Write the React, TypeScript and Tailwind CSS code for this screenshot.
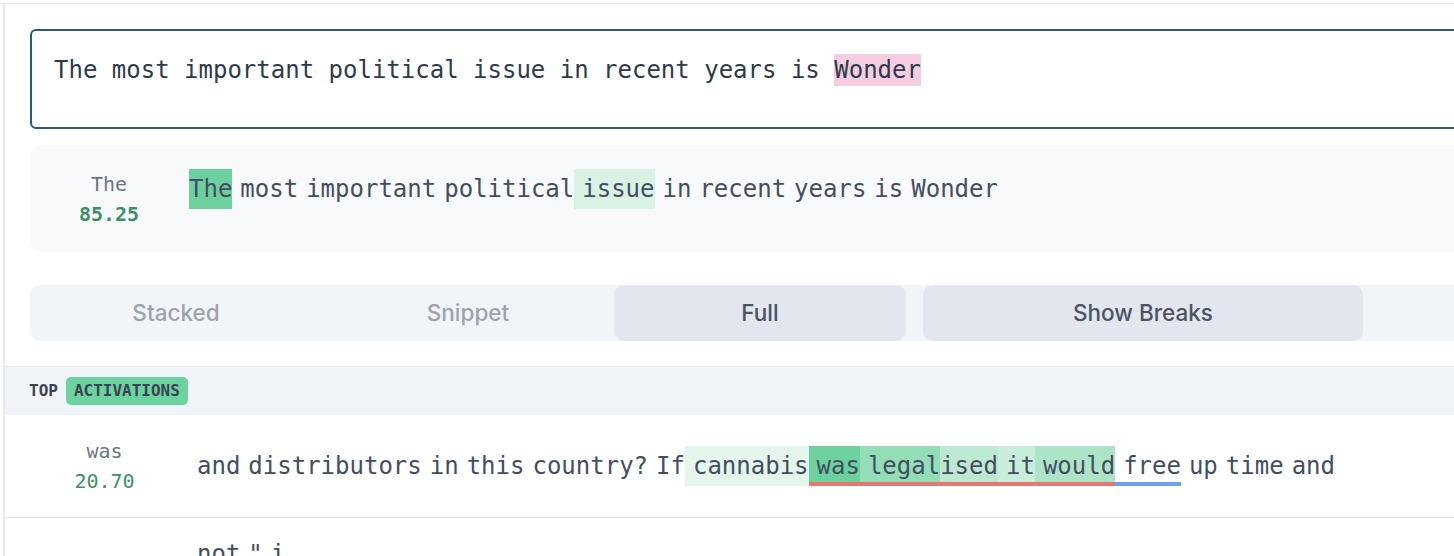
import React from "react";

type Tok = { t: string; bg?: string; line?: string };

const mono = "font-['DejaVu_Sans_Mono',monospace]";

const promptTokens: Tok[] = [
  { t: "The", bg: "bg-[#6cd19f]" },
  { t: " most" },
  { t: " important" },
  { t: " political" },
  { t: " issue", bg: "bg-[#daf2e4]" },
  { t: " in" },
  { t: " recent" },
  { t: " years" },
  { t: " is" },
  { t: " Wonder" },
];

const red = "shadow-[inset_0_-4px_0_#e57771]";
const blue = "shadow-[inset_0_-4px_0_#6fa0ee]";

const rowOne: Tok[] = [
  { t: "and" },
  { t: " distributors" },
  { t: " in" },
  { t: " this" },
  { t: " country" },
  { t: "?" },
  { t: " If" },
  { t: " cannabis", bg: "bg-[#e4f6ec]" },
  { t: " was", bg: "bg-[#6cd19f]", line: red },
  { t: " legal", bg: "bg-[#93ddb7]", line: red },
  { t: "ised", bg: "bg-[#bde9d2]", line: red },
  { t: " it", bg: "bg-[#c8eedb]", line: red },
  { t: " would", bg: "bg-[#ade4c8]", line: red },
  { t: " free", line: blue },
  { t: " up" },
  { t: " time" },
  { t: " and" },
];

const rowTwo: Tok[] = [{ t: "not" }, { t: ' "' }, { t: " i" }];

function Token({ tok }: { tok: Tok }) {
  const lead = tok.t.startsWith(" ");
  const word = lead ? tok.t.slice(1) : tok.t;
  return (
    <span
      className={`inline-block h-[40px] leading-[40px] whitespace-pre ${tok.bg ?? ""} ${
        tok.line ?? ""
      }`}
    >
      {lead && <span className="inline-block w-[8px]">&nbsp;</span>}
      {word}
    </span>
  );
}

function TokenLine({ tokens }: { tokens: Tok[] }) {
  return (
    <div className={`${mono} text-[24px] text-[#434e61]`}>
      {tokens.map((tok, i) => (
        <Token key={i} tok={tok} />
      ))}
    </div>
  );
}

const App = () => {
  return (
    <div className="w-[1454px] h-[556px] overflow-hidden bg-white pt-[3px]">
      <div className="w-[1900px] border-t border-[#e5e6ec]">
        <div className="ml-[3px] border-l-2 border-[#e6eaf0]">
          <div className="px-[25px] pt-[25px] pb-[25px]">
            {/* prompt input */}
            <div
              className={`${mono} h-[100px] rounded-md border-2 border-[#2c5b82] pl-[22px] pt-[21px] text-[24px] leading-[36px] text-[#2e3a4c]`}
            >
              The most important political issue in recent years is{" "}
              <span className="inline-block leading-[32px] bg-[#f6cde0]">Wonder</span>
            </div>

            {/* prompt activations */}
            <div className="mt-[16px] flex items-start rounded-xl bg-[#f8f9fb] pl-[24px] pt-[24px] pb-[23px]">
              <div className={`${mono} w-[110px] text-center text-[20px] leading-[30px]`}>
                <div className="text-[#6b7585]">The</div>
                <div className="font-bold text-[#3e8f65]">85.25</div>
              </div>
              <div className="ml-[25px]">
                <TokenLine tokens={promptTokens} />
              </div>
            </div>

            {/* view toggles */}
            <div className="mt-[33px] flex h-[56px] rounded-[10px] bg-[#f1f4f8] font-['Inter',sans-serif] text-[22.5px] font-medium">
              <div className="flex w-[876px]">
                <button className="flex-1 rounded-[10px] text-[#9ca3af]">Stacked</button>
                <button className="flex-1 rounded-[10px] text-[#9ca3af]">Snippet</button>
                <button className="flex-1 rounded-[10px] bg-[#e2e6ee] text-[#4a5363]">Full</button>
              </div>
              <button className="ml-[17px] w-[440px] rounded-[10px] bg-[#e2e6ee] text-[#4a5363]">
                Show Breaks
              </button>
            </div>
          </div>

          {/* section header */}
          <div className="flex h-[49px] items-center border-t border-[#e3e7ed] bg-[#f1f4f8] pl-[24px]">
            <span className={`${mono} text-[16px] font-bold text-[#3a4353]`}>TOP</span>
            <span
              className={`${mono} ml-[8px] flex h-[28px] items-center rounded-[5px] bg-[#6cd3a0] px-[8px] text-[16px] font-bold text-[#3a4353]`}
            >
              ACTIVATIONS
            </span>
          </div>

          {/* rows */}
          <div className="flex items-center border-b border-[#e5e8ee] py-[21px] pl-[25px]">
            <div className={`${mono} w-[149px] text-center text-[20px] leading-[30px]`}>
              <div className="text-[#6b7585]">was</div>
              <div className="text-[#3d9168]">20.70</div>
            </div>
            <div className="ml-[18px]">
              <TokenLine tokens={rowOne} />
            </div>
          </div>
          <div className="flex items-start pt-[16px] pl-[25px]">
            <div className="w-[149px]" />
            <div className="ml-[18px]">
              <TokenLine tokens={rowTwo} />
            </div>
          </div>
        </div>
      </div>
    </div>
  );
};

export default App;
